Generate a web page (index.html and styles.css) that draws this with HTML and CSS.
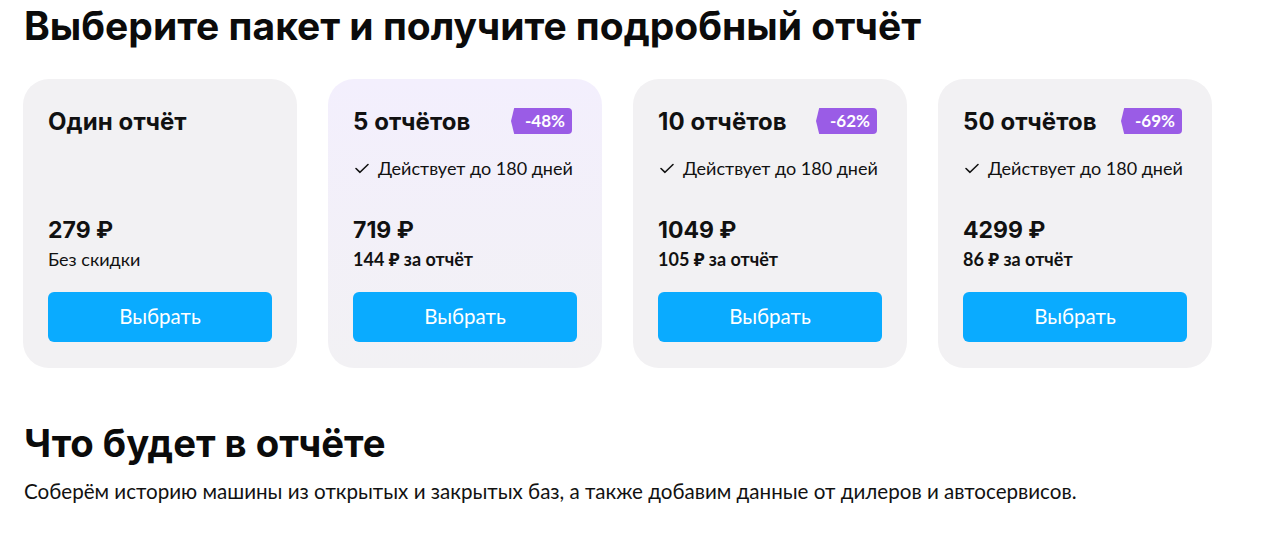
FILE: index.html
```html
<!DOCTYPE html>
<html lang="ru">
<head>
<meta charset="utf-8">
<link rel="stylesheet" href="styles.css">
</head>
<body>
<main class="page">
  <h1 class="title">Выберите пакет и получите подробный отчёт</h1>
  <div class="cards">
    <div class="card">
      <div class="card-head"><span class="card-name">Один отчёт</span></div>
      <div class="card-bottom">
        <div class="price">279 ₽</div>
        <div class="sub">Без скидки</div>
        <button class="btn">Выбрать</button>
      </div>
    </div>
    <div class="card card-accent">
      <div class="card-head"><span class="card-name">5 отчётов</span><span class="badge">-48%</span></div>
      <div class="feature"><svg class="check" viewBox="0 0 16 16" width="16" height="16"><path d="M2 8.5l4 3.8L14 4.5" fill="none" stroke="#111" stroke-width="1.6" stroke-linecap="round" stroke-linejoin="round"/></svg>Действует до 180 дней</div>
      <div class="card-bottom">
        <div class="price">719 ₽</div>
        <div class="sub sub-bold">144 ₽ за отчёт</div>
        <button class="btn">Выбрать</button>
      </div>
    </div>
    <div class="card">
      <div class="card-head"><span class="card-name">10 отчётов</span><span class="badge">-62%</span></div>
      <div class="feature"><svg class="check" viewBox="0 0 16 16" width="16" height="16"><path d="M2 8.5l4 3.8L14 4.5" fill="none" stroke="#111" stroke-width="1.6" stroke-linecap="round" stroke-linejoin="round"/></svg>Действует до 180 дней</div>
      <div class="card-bottom">
        <div class="price">1049 ₽</div>
        <div class="sub sub-bold">105 ₽ за отчёт</div>
        <button class="btn">Выбрать</button>
      </div>
    </div>
    <div class="card">
      <div class="card-head"><span class="card-name">50 отчётов</span><span class="badge">-69%</span></div>
      <div class="feature"><svg class="check" viewBox="0 0 16 16" width="16" height="16"><path d="M2 8.5l4 3.8L14 4.5" fill="none" stroke="#111" stroke-width="1.6" stroke-linecap="round" stroke-linejoin="round"/></svg>Действует до 180 дней</div>
      <div class="card-bottom">
        <div class="price">4299 ₽</div>
        <div class="sub sub-bold">86 ₽ за отчёт</div>
        <button class="btn">Выбрать</button>
      </div>
    </div>
  </div>
  <h2 class="title2">Что будет в отчёте</h2>
  <p class="lead">Соберём историю машины из открытых и закрытых баз, а также добавим данные от дилеров и автосервисов.</p>
</main>
</body>
</html>
```
FILE: styles.css
```css
* { box-sizing: border-box; }
html, body { margin: 0; padding: 0; background: #fff; }
body { font-family: "Lato", "Noto Sans", sans-serif; color: #111; }
.page { padding: 0 23px; }
.title {
  font-family: "Inter", "Noto Sans", sans-serif;
  font-weight: 700;
  font-size: 39px;
  line-height: 46px;
  margin: 3px 0 0 1px;
  color: #0b0b0b;
}
.cards {
  display: flex;
  gap: 31px;
  margin-top: 30px;
}
.card {
  width: 274px;
  height: 289px;
  border-radius: 26px;
  background: #f2f1f3;
  padding: 29px 25px 26px;
  display: flex;
  flex-direction: column;
}
.card-accent {
  background: linear-gradient(180deg, #f3effd 0%, #f2f1f4 100%);
}
.card-head {
  display: flex;
  justify-content: space-between;
  align-items: center;
  height: 26px;
}
.card-name {
  font-family: "Inter", "Noto Sans", sans-serif;
  font-weight: 700;
  font-size: 24px;
  letter-spacing: 0.1px;
  color: #111;
}
.badge {
  position: relative;
  background: #9a5ce6;
  color: #fff;
  font-size: 17px;
  font-weight: 700;
  line-height: 26px;
  height: 26px;
  padding: 0 7px 0 7px;
  border-radius: 0 4px 4px 0;
  margin-right: 5px;
}
.badge::before {
  content: "";
  position: absolute;
  left: -7px;
  top: 0;
  width: 8px;
  height: 26px;
  background: #9a5ce6;
  clip-path: polygon(100% 0, 40% 0, 0 50%, 40% 100%, 100% 100%);
}
.feature {
  display: flex;
  align-items: center;
  gap: 8px;
  font-size: 18px;
  margin-top: 23px;
  line-height: 22px;
}
.check { flex: none; margin-left: 1px; }
.card-bottom { margin-top: auto; display: flex; flex-direction: column; }
.price {
  font-family: "Inter", "Noto Sans", sans-serif;
  font-weight: 700;
  font-size: 23px;
  line-height: 28px;
}
.sub {
  font-size: 18px;
  line-height: 22px;
  margin-top: 4px;
}
.sub-bold { font-weight: 700; }
.btn {
  margin-top: 22px;
  width: 224px;
  height: 50px;
  border: 0;
  border-radius: 6px;
  background: #0aabff;
  color: #fff;
  font-family: "Lato", "Noto Sans", sans-serif;
  font-size: 20.5px;
  padding: 0 0 2px;
  cursor: pointer;
}
.title2 {
  font-family: "Inter", "Noto Sans", sans-serif;
  font-weight: 700;
  font-size: 38.3px;
  line-height: 44px;
  margin: 53px 0 0 1px;
  color: #0b0b0b;
}
.lead {
  font-size: 20.6px;
  line-height: 24px;
  margin: 14px 0 0 1px;
}
```
